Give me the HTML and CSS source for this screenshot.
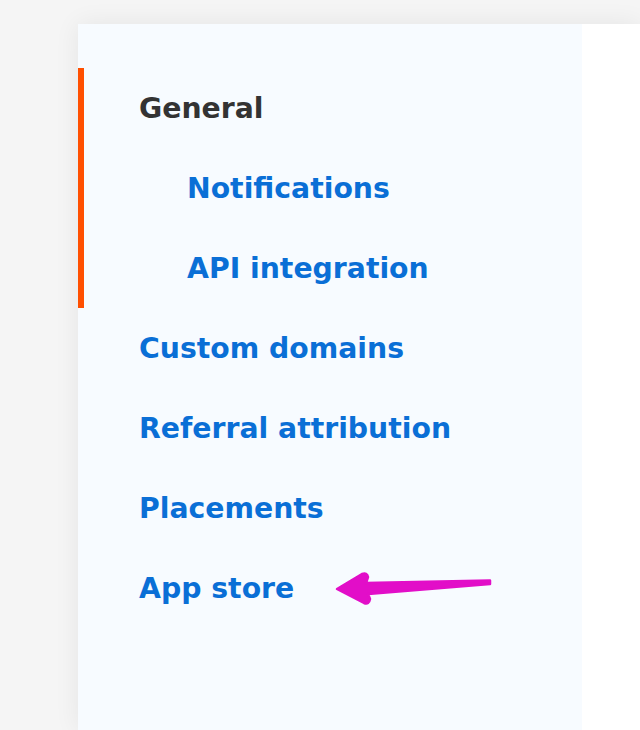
FILE: index.html
```html
<!DOCTYPE html>
<html>
<head>
<meta charset="utf-8">
<link rel="stylesheet" href="styles.css">
</head>
<body>
<div class="panel">
  <nav class="sidebar">
    <div class="group">
      <div class="item current">General</div>
      <a class="item sub" href="#">Notifications</a>
      <a class="item sub" href="#">API integration</a>
    </div>
    <a class="item" href="#">Custom domains</a>
    <a class="item" href="#">Referral attribution</a>
    <a class="item" href="#">Placements</a>
    <a class="item" href="#">App store</a>
  </nav>
  <main class="main"></main>
  <svg class="arrow" width="170" height="45" viewBox="0 0 170 45">
    <path d="M7,24 L32,9 Q37,7 38,12 L36,18 L160,15.5 L160,19 L38,29 L40,34 Q39,40 34,38 Z" fill="#e20ec8" stroke="#e20ec8" stroke-width="2.5" stroke-linejoin="round"/>
  </svg>
</div>
</body>
</html>
```
FILE: styles.css
```css
html, body {
  margin: 0;
  padding: 0;
  background: #f5f5f5;
  height: 100%;
  overflow: hidden;
}
.panel {
  position: relative;
  margin: 24px 0 0 78px;
  height: calc(100vh - 24px);
  display: flex;
  background: #ffffff;
  box-shadow: 0 0 24px rgba(0, 0, 0, 0.07);
}
.sidebar {
  width: 504px;
  flex: none;
  background: #f7fbff;
  padding-top: 44px;
  display: flex;
  flex-direction: column;
  font-family: "DejaVu Sans", sans-serif;
  font-weight: bold;
  font-size: 28.3px;
}
.main {
  flex: 1;
  background: #ffffff;
}
.group {
  border-left: 6px solid #ff4f00;
  display: flex;
  flex-direction: column;
}
.item {
  height: 80px;
  display: flex;
  align-items: center;
  padding-left: 61px;
  color: #0a6fd6;
  text-decoration: none;
}
.group .item {
  padding-left: 55px;
}
.group .item.sub {
  padding-left: 103px;
}
.item.current {
  color: #333333;
}
.arrow {
  position: absolute;
  left: 252px;
  top: 541px;
}
```
